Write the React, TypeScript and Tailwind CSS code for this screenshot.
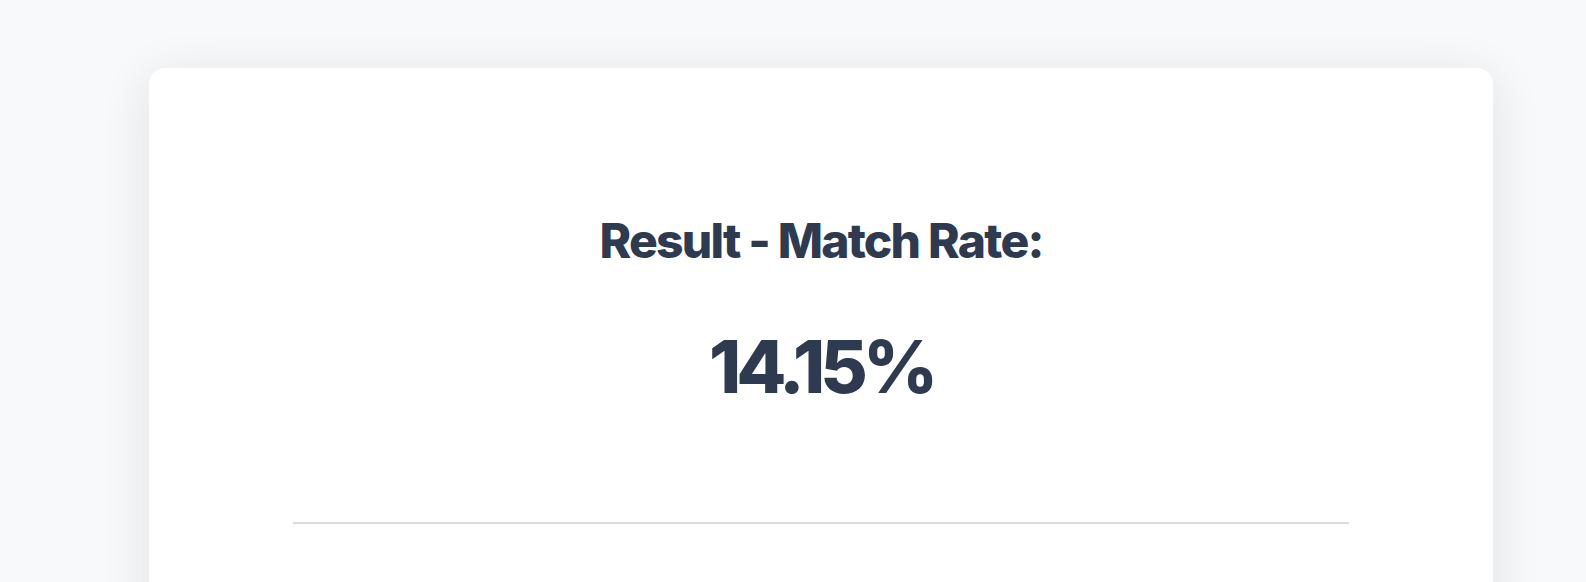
import React from "react";

export default function App() {
  return (
    <div className="min-h-screen bg-[#f8f9fa] pl-[149px] pr-[93px] pt-[68px] pb-[40px]" style={{ fontFamily: "Inter, 'Noto Sans', sans-serif" }}>
      <div className="bg-white rounded-2xl shadow-[0_10px_50px_rgba(17,24,39,0.11)] px-[144px] pt-[149px] pb-[120px] min-h-[560px]">
        <div className="flex flex-col items-center text-[#2d3a4f]">
          <h1 className="text-[48px] leading-none font-extrabold tracking-[-0.037em]">Result - Match Rate:</h1>
          <div className="mt-[65px] text-[73px] leading-none font-extrabold tracking-[-0.068em]">14.15%</div>
        </div>
        <div className="mt-[119px] border-t-2 border-[#dadadf]" />
      </div>
    </div>
  );
}
